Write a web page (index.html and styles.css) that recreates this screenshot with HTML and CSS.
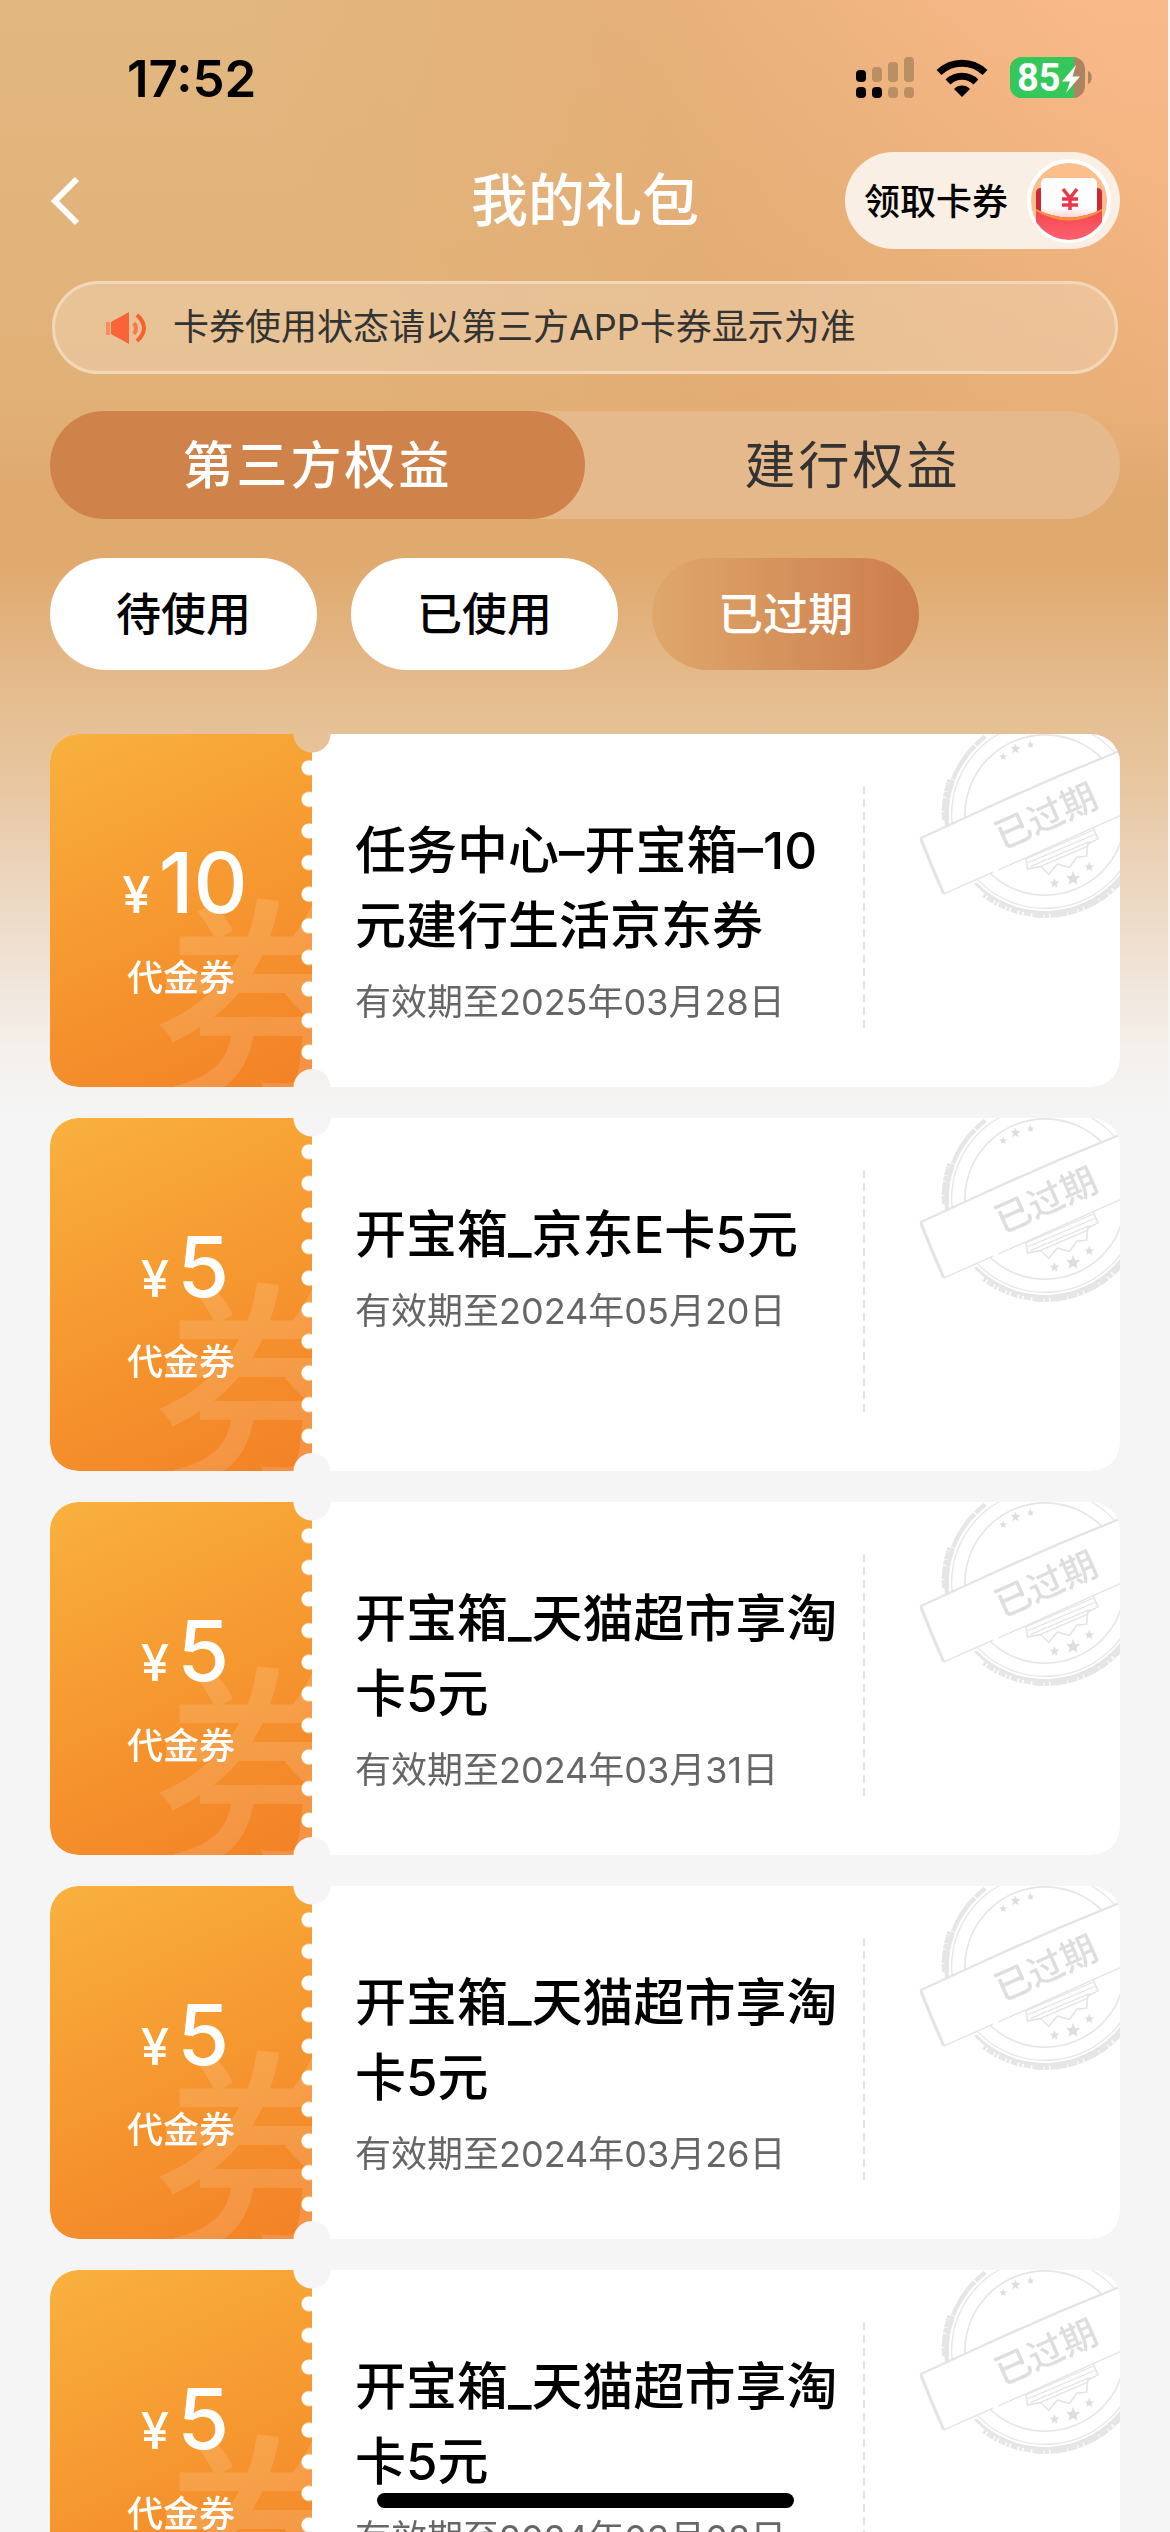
FILE: index.html
```html
<!DOCTYPE html>
<html lang="zh-CN">
<head>
<meta charset="utf-8">
<meta name="viewport" content="width=device-width, initial-scale=1">
<title>我的礼包</title>
<link rel="stylesheet" href="styles.css">
</head>
<body>
<svg class="defs" aria-hidden="true">
  <defs>
    <symbol id="star" viewBox="-10 -10 20 20"><path d="M0-10 2.6-3.4 9.6-3 4.2 1.4 6 8.2 0 4.4-6 8.2-4.2 1.4-9.6-3-2.6-3.4z"/></symbol>
    <symbol id="stamp" viewBox="170 42 610 558">
      <g fill="none" stroke="#e6e6e6">
        <circle cx="555" cy="285" r="241" stroke-width="5"/>
        <circle cx="555" cy="285" r="281" stroke-width="4"/>
        <path stroke-width="13" stroke-dasharray="90 3 60 2 120 4" d="M262 330A297 297 0 0 1 375 49"/>
        <path stroke-width="22" stroke-dasharray="24 2 40 3 15 2" d="M256 300A299 299 0 0 1 272 180"/>
        <path stroke-width="9" d="M345 490A294 294 0 0 0 790 460"/>
        <path stroke-width="20" stroke-dasharray="30 3 14 4 50 2" d="M520 582A299 299 0 0 0 780 483"/>
        <path stroke-width="14" stroke-dasharray="9 5 22 4" d="M370 525A303 303 0 0 0 520 584"/>
      </g>
      <g fill="none" stroke="#e4e4e4" stroke-width="5">
        <path d="M495 400 502 447 542 440 566 463 592 432 628 443 650 412 680 408 683 372 714 356 700 325"/>
        <path stroke-width="4" d="M500 415 700 330M504 428 708 342M510 440 690 364M540 440 680 380"/>
      </g>
      <path d="M180 355 790 88V283L250 523z" fill="#fff"/>
      <g fill="none" stroke="#e4e4e4">
        <path stroke-width="7" d="M180 355 420 245 600 166 790 88"/>
        <path stroke-width="9" d="M181 356 215 440 250 521"/>
        <path stroke-width="4" d="M250 523 400 456M415 450 790 283"/>
      </g>
      <g fill="#dedede">
        <use href="#star" x="417" y="98" width="24" height="24"/>
        <use href="#star" x="450" y="70" width="32" height="32"/>
        <use href="#star" x="499" y="62" width="24" height="24"/>
        <use href="#star" x="568" y="475" width="30" height="30"/>
        <use href="#star" x="616" y="453" width="46" height="46"/>
        <use href="#star" x="673" y="426" width="30" height="30"/>
      </g>
      <text class="stamp-text" x="557" y="327" text-anchor="middle" transform="rotate(-24 557 287)">已过期</text>
    </symbol>
  </defs>
</svg>

<div class="page">
  <header class="top">
    <div class="status">
      <span class="clock">17:52</span>
      <div class="status-icons">
        <svg width="58" height="42" viewBox="0 0 58 42" aria-label="信号">
          <g fill="#000"><rect y="13" width="10" height="12" rx="4"/><rect y="30" width="10" height="11" rx="4"/><rect x="16" y="30" width="10" height="11" rx="4"/></g>
          <g fill="#bb8f64"><rect x="16" y="10" width="10" height="15" rx="4"/><rect x="32" y="5" width="10" height="20" rx="4"/><rect x="48" y="0" width="10" height="25" rx="4"/><rect x="32" y="30" width="10" height="11" rx="4"/><rect x="48" y="30" width="10" height="11" rx="4"/></g>
        </svg>
        <svg width="52" height="38" viewBox="0 0 52 38" aria-label="无线网络">
          <g fill="none" stroke="#000" stroke-width="7"><path d="M3 13.500a33 33 0 0 1 46 0"/><path d="M12 23a20 20 0 0 1 28 0"/></g>
          <path d="M26 38 18 30a11 11 0 0 1 16 0z"/>
        </svg>
        <svg width="82" height="42" viewBox="0 0 82 42" aria-label="电量">
          <defs><clipPath id="cell"><rect width="75" height="41" rx="12"/></clipPath></defs>
          <g clip-path="url(#cell)"><rect width="75" height="41" fill="#ad8360"/><rect width="64" height="41" fill="#34c759"/></g>
          <path d="M78 14c5 2 5 11 0 13z" fill="#ad8360"/>
          <text class="battery-text" x="7" y="34">85</text>
          <path d="M66 8 52 24.500h8L56 36 70 19.500h-7.500z" fill="#fff"/>
        </svg>
      </div>
    </div>

    <div class="nav">
      <button class="back" type="button" aria-label="返回">
        <svg width="30" height="50" viewBox="0 0 30 50"><path d="M27 3 5 25l22 22" fill="none" stroke="#fff" stroke-width="6"/></svg>
      </button>
      <h1>我的礼包</h1>
      <button class="claim" type="button">
        <span>领取卡券</span>
        <svg width="84" height="84" viewBox="0 0 84 84" aria-hidden="true">
          <defs>
            <linearGradient id="red" x2="0" y2="1"><stop stop-color="#f2454e"/><stop offset="1" stop-color="#ff6270"/></linearGradient>
            <linearGradient id="paper" x2="0" y2="1"><stop offset=".7" stop-color="#fff"/><stop offset="1" stop-color="#fcc9c9"/></linearGradient>
            <clipPath id="disc"><circle cx="42" cy="42" r="39"/></clipPath>
          </defs>
          <circle cx="42" cy="42" r="40" fill="#fcbf8b" stroke="#fff" stroke-width="4"/>
          <g clip-path="url(#disc)">
            <path d="M9 34q0-5 5-5h56q5 0 5 5v20H9z" fill="#cf2738"/>
            <rect x="14" y="19" width="56" height="42" rx="5" fill="url(#paper)"/>
            <path d="M9 50q33 17 66 0v17q-8 15-33 15T9 67z" fill="url(#red)"/>
            <path d="M9 50q33 17 66 0v2q-33 19-66 0z" fill="#f9913c"/>
          </g>
          <path d="M36 30l7 9 7-9M43 39v12M35 40h16M35 46h16" fill="none" stroke="#e9364a" stroke-width="3.500"/>
        </svg>
      </button>
    </div>

    <div class="notice">
      <svg width="40" height="34" viewBox="0 0 40 34" aria-hidden="true">
        <path d="M0 11h4v13H0z" fill="#f98b62"/><path d="M5 11 23 1v32L5 23z" fill="#fa6338"/>
        <path d="M28 12q4 5 0 11" fill="none" stroke="#f67c4e" stroke-width="4"/><path d="M31 4q14 13 0 26" fill="none" stroke="#f8612f" stroke-width="4"/>
      </svg>
      <span>卡券使用状态请以第三方APP卡券显示为准</span>
    </div>

    <div class="tabs">
      <button class="tab tab-on" type="button">第三方权益</button>
      <button class="tab" type="button">建行权益</button>
    </div>

    <div class="filters">
      <button class="filter" type="button">待使用</button>
      <button class="filter" type="button">已使用</button>
      <button class="filter filter-on" type="button">已过期</button>
    </div>
  </header>

  <main class="list">
    <article class="coupon">
      <div class="value"><span class="mark" aria-hidden="true">券</span><p class="amount"><small>¥</small>10</p><p class="kind">代金券</p></div>
      <div class="info"><h2>任务中心–开宝箱–10元建行生活京东券</h2><p class="date">有效期至2025年03月28日</p></div>
      <div class="side"><svg class="stamp" role="img" aria-label="已过期"><use href="#stamp"/></svg></div>
    </article>
    <article class="coupon">
      <div class="value"><span class="mark" aria-hidden="true">券</span><p class="amount"><small>¥</small>5</p><p class="kind">代金券</p></div>
      <div class="info"><h2>开宝箱_京东E卡5元</h2><p class="date">有效期至2024年05月20日</p></div>
      <div class="side"><svg class="stamp" role="img" aria-label="已过期"><use href="#stamp"/></svg></div>
    </article>
    <article class="coupon">
      <div class="value"><span class="mark" aria-hidden="true">券</span><p class="amount"><small>¥</small>5</p><p class="kind">代金券</p></div>
      <div class="info"><h2>开宝箱_天猫超市享淘卡5元</h2><p class="date">有效期至2024年03月31日</p></div>
      <div class="side"><svg class="stamp" role="img" aria-label="已过期"><use href="#stamp"/></svg></div>
    </article>
    <article class="coupon">
      <div class="value"><span class="mark" aria-hidden="true">券</span><p class="amount"><small>¥</small>5</p><p class="kind">代金券</p></div>
      <div class="info"><h2>开宝箱_天猫超市享淘卡5元</h2><p class="date">有效期至2024年03月26日</p></div>
      <div class="side"><svg class="stamp" role="img" aria-label="已过期"><use href="#stamp"/></svg></div>
    </article>
    <article class="coupon">
      <div class="value"><span class="mark" aria-hidden="true">券</span><p class="amount"><small>¥</small>5</p><p class="kind">代金券</p></div>
      <div class="info"><h2>开宝箱_天猫超市享淘卡5元</h2><p class="date">有效期至2024年03月08日</p></div>
      <div class="side"><svg class="stamp" role="img" aria-label="已过期"><use href="#stamp"/></svg></div>
    </article>
  </main>
</div>
<div class="home-bar"></div>
</body>
</html>
```
FILE: styles.css
```css
* { box-sizing: border-box; }
html { background: #f5f5f5; }
body {
  margin: 0;
  height: 100vh;
  overflow: hidden;
  font-family: Inter, "Noto Sans CJK SC", sans-serif;
  color: #000;
}
h1, h2, p { margin: 0; font-weight: 500; }
button { border: 0; padding: 0; background: none; color: inherit; font: inherit; }
svg { display: block; flex: none; }
.defs { position: absolute; width: 0; height: 0; }

.page {
  margin-right: 2px;
  background:
    linear-gradient(to bottom, rgba(224, 169, 110, 0) 0, rgba(224, 169, 110, .3) 250px, rgba(224, 169, 110, .5) 400px, #e0a96e 500px, #e0a96e 560px, #e5bd90 700px, #e8c6a0 780px, #eddac6 910px, #f4f0ec 1050px, #f5f5f5 1120px),
    linear-gradient(70deg, #e2b880 40%, #e5b079 65%, #fab989 95%);
  background-size: 100% 1120px;
  background-repeat: no-repeat;
}
.top { padding: 0 48px 0 50px; }

.status {
  display: flex;
  justify-content: space-between;
  align-items: center;
  height: 152px;
  padding: 4px 28px 0 77px;
}
.clock { font-size: 51px; font-weight: 600; }
.status-icons { display: flex; align-items: center; gap: 22px; }
.battery-text { font: 700 38px Roboto, sans-serif; fill: #fff; }

.nav {
  display: grid;
  grid-template-columns: 1fr auto 1fr;
  align-items: center;
  height: 97px;
}
.back { justify-self: start; }
h1 { font-size: 57px; line-height: 80px; color: #fff; }
.claim {
  justify-self: end;
  display: flex;
  align-items: center;
  gap: 19px;
  height: 97px;
  padding: 0 9px 0 19px;
  border-radius: 49px;
  background: #faefe5;
  font-size: 36px;
  font-weight: 500;
}
.claim span { padding-bottom: 4px; }

.notice {
  display: flex;
  align-items: center;
  gap: 27px;
  height: 93px;
  margin: 32px 2px 0;
  padding: 0 51px;
  border: 3px solid #f2d8b9;
  border-radius: 47px;
  background: rgba(240, 220, 195, .4);
  color: #333;
  font-size: 36px;
}
.notice span { padding-bottom: 8px; }

.tabs {
  display: grid;
  grid-template-columns: 1fr 1fr;
  height: 108px;
  margin-top: 37px;
  border-radius: 54px;
  background: #e5b98c;
}
.tab { padding-bottom: 6px; border-radius: 54px; color: #333; font-size: 51px; letter-spacing: 3px; }
.tab-on { background: #cf8249; color: #fff; font-weight: 500; }

.filters { display: flex; gap: 34px; margin-top: 39px; }
.filter {
  width: 267px;
  height: 112px;
  padding-bottom: 6px;
  border-radius: 56px;
  background: #fff;
  font-size: 45px;
  font-weight: 500;
}
.filter-on { background: linear-gradient(to right, #dfa76b, #cc7d4c); color: #fff; }

.list { display: grid; gap: 31px; padding: 64px 48px 31px 50px; }
.coupon {
  display: grid;
  grid-template-columns: 262px 1fr 257px;
  height: 353px;
  border-radius: 28px;
  background: #fff;
  overflow: hidden;
  -webkit-mask: radial-gradient(circle at 262px 0, transparent 18px, #000 19px) top / 100% 51% no-repeat, radial-gradient(circle at 262px 100%, transparent 18px, #000 19px) bottom / 100% 50% no-repeat;
  mask: radial-gradient(circle at 262px 0, transparent 18px, #000 19px) top / 100% 51% no-repeat, radial-gradient(circle at 262px 100%, transparent 18px, #000 19px) bottom / 100% 50% no-repeat;
}
.value {
  position: relative;
  overflow: hidden;
  padding-top: 98px;
  background: linear-gradient(155deg, #f9b13e 0, #f69830 50%, #f38126 100%);
  color: #fff;
  text-align: center;
}
/* Perforated edge */
.value::after {
  content: "";
  position: absolute;
  top: 18px;
  right: 0;
  bottom: 19px;
  width: 11px;
  background: radial-gradient(circle at 8px 50%, #fff 7px, rgba(255, 255, 255, 0) 8px) 0 0 / 11px 32px round;
}
.mark {
  position: absolute;
  left: 103px;
  top: 162px;
  font-size: 220px;
  line-height: 220px;
  font-weight: 500;
  opacity: .13;
}
.amount { position: relative; padding-left: 8px; font-size: 84px; line-height: 102px; }
.amount small { margin-right: 8px; font-size: 51px; }
.kind { position: relative; margin-top: 5px; font-size: 36px; line-height: 54px; }

.info { padding: 79px 0 0 43px; }
h2 { font-size: 51px; line-height: 75px; }
.date { margin-top: 12px; color: #666; font-size: 36px; line-height: 54px; font-weight: 400; }

.side {
  position: relative;
  background: repeating-linear-gradient(to bottom, #e3e3e3 0 8px, #fff 8px 13px) 0 52px / 2px 246px no-repeat;
}
.stamp { position: absolute; top: 0; right: 0; width: 203px; height: 186px; }
.stamp-text { font: 500 108px "Noto Sans CJK SC", sans-serif; fill: #dedede; }

.home-bar {
  position: fixed;
  left: 50%;
  bottom: 24px;
  width: 417px;
  height: 15px;
  margin-left: -208px;
  border-radius: 8px;
  background: #000;
}
```
